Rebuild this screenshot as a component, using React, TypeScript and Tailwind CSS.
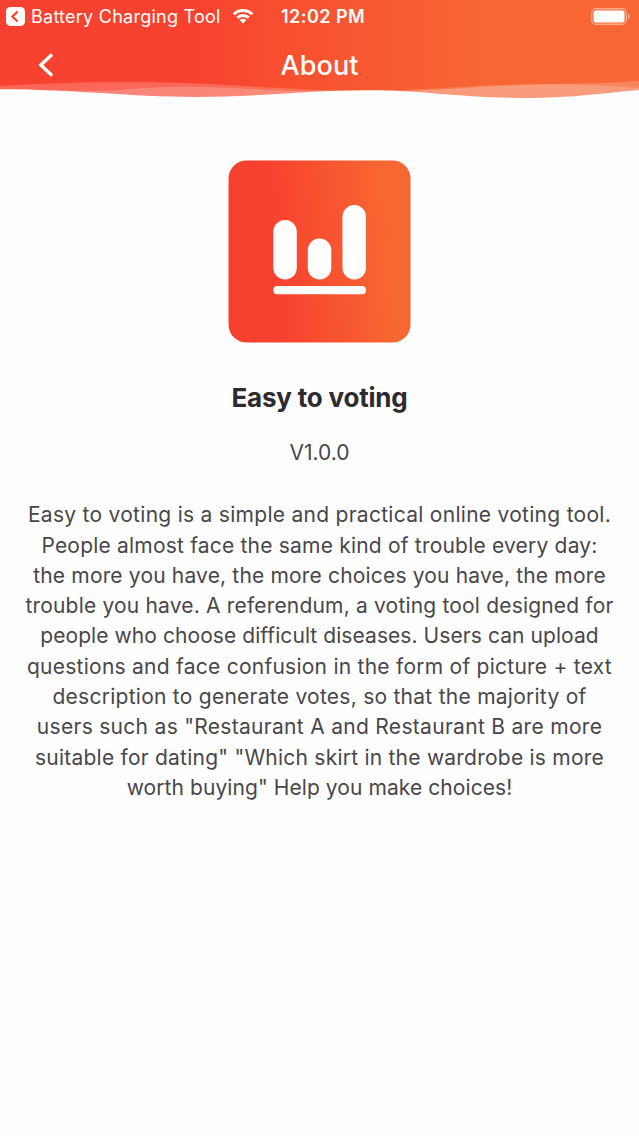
import { ReactNode } from "react";

interface TextLineProps {
  text: string;
  className: string;
}

const description: TextLineProps[] = [
  { text: "Easy to voting is a simple and practical online voting tool.", className: "tracking-[0.28px]" },
  { text: "People almost face the same kind of trouble every day:", className: "tracking-[0.2px]" },
  { text: "the more you have, the more choices you have, the more", className: "tracking-[0.17px]" },
  { text: "trouble you have. A referendum, a voting tool designed for", className: "tracking-[0.18px]" },
  { text: "people who choose difficult diseases. Users can upload", className: "tracking-[0.07px]" },
  { text: "questions and face confusion in the form of picture + text", className: "tracking-[0.25px]" },
  { text: "description to generate votes, so that the majority of", className: "tracking-[0.26px]" },
  { text: 'users such as "Restaurant A and Restaurant B are more', className: "tracking-[0.3px]" },
  { text: 'suitable for dating" "Which skirt in the wardrobe is more', className: "tracking-[0.23px]" },
  { text: 'worth buying" Help you make choices!', className: "tracking-[0.08px]" },
];

const WifiIcon = () => (
  <svg width="22" height="16" viewBox="0 0 22 16" fill="white">
    <path d="M11 15.4 7.7 12.1a4.7 4.7 0 0 1 6.6 0z" />
    <path d="M6.4 10.8 4.3 8.7a9.5 9.5 0 0 1 13.4 0l-2.1 2.1a6.5 6.5 0 0 0-9.2 0z" />
    <path d="M2.9 7.3.6 5.2a14.8 14.8 0 0 1 20.8 0l-2.3 2.1a11.6 11.6 0 0 0-16.2 0z" />
  </svg>
);

const BatteryIcon = () => (
  <svg width="40" height="17" viewBox="0 0 40 17">
    <rect x="0.75" y="0.75" width="34.5" height="15.5" rx="4" fill="none" stroke="white" strokeOpacity="0.45" strokeWidth="1.3" />
    <rect x="2.5" y="2.5" width="31" height="12" rx="2.3" fill="white" />
    <path d="M37 5.8c1.4.6 2 1.5 2 2.7s-.6 2.1-2 2.7z" fill="white" fillOpacity="0.45" />
  </svg>
);

const StatusBar = () => (
  <div className="flex h-8 shrink-0 items-center text-white">
    <svg className="ml-1.5 shrink-0" width="19" height="19" viewBox="0 0 19 19">
      <rect width="19" height="19" rx="4.5" fill="white" />
      <path d="m11.6 4.5-5.2 5 5.2 5" fill="none" stroke="#f8432f" strokeWidth="2.2" />
    </svg>
    <span className="ml-1.5 w-[200.5px] whitespace-nowrap text-[18px] tracking-[0.25px]">
      Battery Charging Tool
    </span>
    <WifiIcon />
    <span className="ml-[27.5px] whitespace-nowrap text-[18px] font-semibold tracking-[0.45px]">
      12:02 PM
    </span>
    <div className="mr-2 ml-auto">
      <BatteryIcon />
    </div>
  </div>
);

// Two translucent crests over the header, then the page colour below them
const Waves = () => (
  <svg className="block w-full shrink-0" height="20" viewBox="0 80 639 20">
    <g fill="white" fillOpacity="0.2">
      <path d="M0 86C50 83 90 82 130 82C200 82 250 87 320 90L370 91C430 90 450 87 500 85C560 83 600 84 639 81V100H0Z" />
      <path d="M0 100V89.5C50 90 90 92 120 90C150 87 175 86.5 205 87C245 88 270 91 310 91H400C440 90 460 88 500 86C550 83 600 85 639 88V100Z" />
    </g>
    <path
      d="M0 89.3C75 89.3 130 97 195 97C260 97 310 90.3 367 90.3C425 90.3 460 98 525 98C570 98 600 93.5 639 90V100H0Z"
      fill="#fefefe"
    />
  </svg>
);

const Header = ({ children }: { children: ReactNode }) => (
  <header className="flex h-[100px] flex-col bg-linear-to-r from-[#f8412f] from-30% to-[#f76633] to-75%">
    <StatusBar />
    <div className="grid h-12 shrink-0 grid-cols-3 items-center pt-[18px] text-white">
      <svg className="ml-[37px]" width="18" height="26" viewBox="0 0 18 26">
        <path d="M15 2.5 3.8 13 15 23.5" fill="none" stroke="white" strokeWidth="3.4" />
      </svg>
      <h1 className="text-center text-[27px] leading-none font-medium tracking-[0.1px]">{children}</h1>
    </div>
    <Waves />
  </header>
);

const AppLogo = () => (
  <svg width="183" height="183" viewBox="0 0 183 183">
    <defs>
      <linearGradient id="logo" x1="0" y1="0.54" x2="1" y2="0.46">
        <stop offset="0.25" stopColor="#f7412f" />
        <stop offset="0.88" stopColor="#f76731" />
      </linearGradient>
    </defs>
    <rect x="0.5" y="0.5" width="182" height="182" rx="18" fill="url(#logo)" />
    <g fill="white">
      <rect x="45.3" y="60" width="23.5" height="59.5" rx="11.75" />
      <rect x="79.8" y="78.5" width="23.5" height="41" rx="11.75" />
      <rect x="114.5" y="45" width="23.5" height="74.5" rx="11.75" />
      <rect x="45.3" y="126" width="92.7" height="8.3" rx="4.1" />
    </g>
  </svg>
);

export default function App() {
  return (
    <div className="flex h-[1136px] w-full flex-col overflow-hidden bg-[#fefefe] font-['Inter','Liberation_Sans',sans-serif]">
      <Header>About</Header>
      <main className="flex flex-col items-center pt-[60px]">
        <AppLogo />
        <h2 className="mt-[39px] text-[26px] leading-8 font-bold tracking-[-0.2px] text-[#2d2a30]">
          Easy to voting
        </h2>
        <p className="mt-[23px] text-[21px] leading-8 text-[#49464b]">V1.0.0</p>
        <div className="mt-[31.3px] flex flex-col items-center text-[21px] leading-[30.3px] text-[#49464b]">
          {description.map((line) => (
            <p key={line.text} className={`whitespace-nowrap ${line.className}`}>
              {line.text}
            </p>
          ))}
        </div>
      </main>
    </div>
  );
}
